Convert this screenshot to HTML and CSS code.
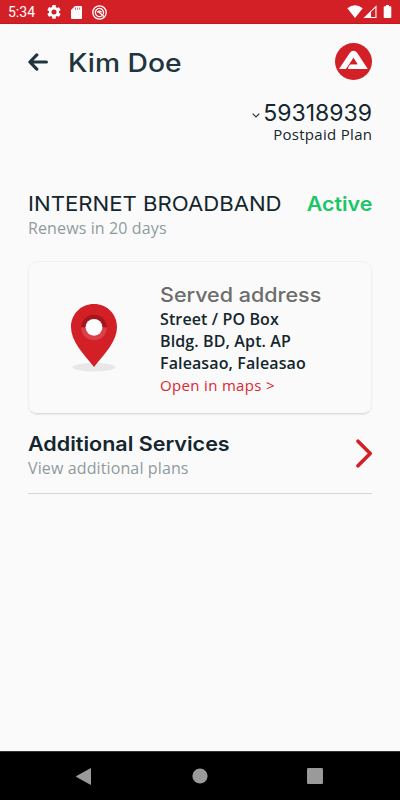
FILE: index.html
```html
<!DOCTYPE html>
<html lang="en">
<head>
<meta charset="utf-8">
<title>Internet Broadband</title>
<link rel="stylesheet" href="styles.css">
</head>
<body>
<div class="status">
  <span class="clock">5:34</span>
  <svg class="gear" width="14" height="14" viewBox="2 2 20 20"><path fill="#fff" d="M19.14 12.94c.04-.3.06-.61.06-.94s-.02-.64-.07-.94l2.03-1.58a.49.49 0 0 0 .12-.61l-1.92-3.32a.49.49 0 0 0-.59-.22l-2.39.96a7 7 0 0 0-1.62-.94l-.36-2.54A.48.48 0 0 0 13.92 2h-3.84a.48.48 0 0 0-.47.41l-.36 2.54c-.59.24-1.13.57-1.62.94l-2.39-.96a.49.49 0 0 0-.59.22L2.74 8.87a.48.48 0 0 0 .12.61l2.03 1.58a7 7 0 0 0 0 1.88l-2.03 1.58a.49.49 0 0 0-.12.61l1.92 3.32c.12.22.37.29.59.22l2.39-.96c.5.38 1.03.7 1.62.94l.36 2.54c.05.24.24.41.48.41h3.84c.24 0 .44-.17.47-.41l.36-2.54a7 7 0 0 0 1.62-.94l2.39.96c.22.08.47 0 .59-.22l1.92-3.32a.48.48 0 0 0-.12-.61zM12 15.6a3.6 3.6 0 1 1 0-7.2 3.6 3.6 0 0 1 0 7.2z"/></svg>
  <svg class="sd" width="11" height="13" viewBox="0 0 11 13"><path fill="#fff" d="M4 0h6a1 1 0 0 1 1 1v11a1 1 0 0 1-1 1H1a1 1 0 0 1-1-1V4z"/><path stroke="#d32027" stroke-width=".7" d="M4.500 1.500v2.300M6.600 1.500v2.300M8.700 1.500v2.300"/></svg>
  <svg class="radar" width="15" height="15" viewBox="0 0 15 15" fill="none" stroke="#fff"><circle cx="7.500" cy="7.500" r="6.700" stroke-width="1.300"/><path stroke-width="1.300" stroke-linecap="round" d="M9.700 11A4.100 4.100 0 1 1 11.300 9M6.800 6.900l4.900 4.300"/><path stroke-width="1.300" d="M5.300 7.300Q7.300 4.900 9.600 7.300"/></svg>
  <svg class="signals" width="46" height="14" viewBox="0 0 46 14"><path fill="#fff" d="M.3 3.200Q8-2.600 15.700 3.200L8 13z"/><path fill="#fff" d="M29.500.3V13H16.500z"/><path fill="#d32027" d="M24 6.900 28.400 2.800V11.900H24z"/><path fill="#fff" d="M39 1.200V0h3v1.200h1.600q.7 0 .7.700v10.400q0 .7-.7.700h-6.200q-.7 0-.7-.7V1.900q0-.7.700-.7z"/></svg>
</div>
<main class="page">
  <header class="top">
    <svg class="back" width="20" height="18" viewBox="0 0 20 18" fill="none" stroke="#20353e" stroke-width="3.200" stroke-linecap="round" stroke-linejoin="round"><path d="M8.800 1.900 1.900 9l6.900 7.100M2.500 9h15.900"/></svg>
    <h1 class="name">Kim Doe</h1>
    <svg class="logo" width="37" height="37" viewBox="0 0 37 37"><circle cx="18.500" cy="18.500" r="18.500" fill="#d32027"/><path fill="#fff" d="M4 26 14.700 10Q16.300 7.800 18.500 7.800T22.300 10L32.800 26H12.800Q13 23.500 15 21.300H22.300L18.500 15.400 12.500 24.400Q11.500 26 10 26z"/><path fill="#d32027" d="M18.500 14.800 11 26h1.900Q13 23 15.500 21.300H22.700z"/></svg>
  </header>
  <section class="account">
    <div class="number"><svg width="8" height="5" viewBox="0 0 8 5" fill="none" stroke="#20353e" stroke-width="1.200"><path d="m.7.7 3.300 3.300L7.300.7"/></svg><span class="digits">59318939</span></div>
    <div class="plan">Postpaid Plan</div>
  </section>
  <section class="service">
    <div class="row"><h2 class="title">INTERNET BROADBAND</h2><span class="active">Active</span></div>
    <p class="note renews">Renews in 20 days</p>
  </section>
  <section class="card">
    <svg class="pin" width="46" height="70" viewBox="0 0 46 70"><ellipse cx="23" cy="63.200" rx="21.500" ry="4.200" fill="#e8e8e8"/><path fill="#d32027" d="M23 0C10 0 0 10 0 23 0 37 11 48 23 63 35 48 46 37 46 23 46 10 36 0 23 0z"/><path fill="#a3161d" d="M10.200 23.500a12.800 12.800 0 0 1 25.600 0z"/><path fill="#dc414a" d="M10.200 23.500a12.800 12.800 0 0 0 25.600 0z"/><circle cx="23" cy="23.300" r="8.400" fill="#fff"/></svg>
    <div class="address">
      <h3 class="served">Served address</h3>
      <p class="line">Street / PO Box</p>
      <p class="line">Bldg. BD, Apt. AP</p>
      <p class="line">Faleasao, Faleasao</p>
      <p class="maps">Open in maps &gt;</p>
    </div>
  </section>
  <section class="extra">
    <div><h2 class="services">Additional Services</h2><p class="note view">View additional plans</p></div>
    <svg width="16" height="29" viewBox="0 0 16 29" fill="none" stroke="#d32027" stroke-width="3.600" stroke-linecap="round" stroke-linejoin="round"><path d="M2 2.200 14.200 14.500 2 26.800"/></svg>
  </section>
</main>
<nav class="nav">
  <svg width="15" height="17" viewBox="0 0 15 17"><path fill="#9a9a9a" d="M15 .6v15.800q0 .6-.6.300L.4 9Q-.2 8.500.4 8L14.400.3Q15 0 15 .6z"/></svg>
  <svg class="home" width="16" height="16"><circle cx="8" cy="8" r="7.600" fill="#9a9a9a"/></svg>
  <svg width="16" height="16"><rect width="16" height="16" rx="1.200" fill="#9a9a9a"/></svg>
</nav>
</body>
</html>
```
FILE: styles.css
```css
* { box-sizing: border-box; margin: 0; padding: 0; }
body { width: 400px; height: 800px; display: flex; flex-direction: column; background: #fafafa; font-family: "Open Sans", sans-serif; color: #14262e; overflow: hidden; white-space: nowrap; }
svg { display: block; flex: none; }
h1, h2, h3, .digits, .active { font-family: Inter, sans-serif; font-weight: 500; }
h1, h2, h3 { transform-origin: left center; }
.status { height: 24px; background: #d32027; border-bottom: 1px solid #c41820; display: flex; align-items: center; padding: 1px 8px 0; color: #fff; }
.clock { font: 14px Roboto, sans-serif; width: 39px; }
.sd { margin-left: 10px; }
.radar { margin-left: 10px; }
.signals { margin-left: auto; margin-right: -1px; }
.page { flex: 1; padding: 0 28px; }
.top { height: 75px; display: flex; align-items: center; }
.name { margin-left: 20px; font-size: 25px; line-height: 30px; padding-top: 3px; transform: scaleX(1.13); color: #20353e; }
.logo { margin-left: auto; }
.account { display: flex; flex-direction: column; align-items: flex-end; }
.number { height: 27px; display: flex; align-items: center; gap: 3px; }
.digits { font-size: 23px; line-height: 24px; font-weight: 400; }
.number svg { margin-top: 5px; }
.plan { font-size: 15px; line-height: 17px; letter-spacing: .3px; margin-right: -.3px; }
.service { margin-top: 49px; }
.row { height: 24px; display: flex; justify-content: space-between; align-items: center; }
.title { font-size: 20px; font-weight: 400; transform: scaleX(1.107); }
.active { font-size: 20px; font-weight: 600; color: #1bc666; transform: scaleX(1.07); transform-origin: right center; }
.note { font-size: 16px; line-height: 24px; color: #909a9e; letter-spacing: .12px; }
.card { height: 153px; margin-top: 21px; border-radius: 9px; border: 1px solid #f1f1f1; border-bottom-color: #dedede; box-shadow: 0 1px 1px #e8e8e8; display: flex; padding: 21px 0 0 42px; }
.pin { margin-top: 21px; }
.address { margin-left: 43px; }
.served { font-size: 20px; line-height: 25px; color: #6c6c6c; font-weight: 500; transform: scaleX(1.075); }
.line { font-size: 16px; line-height: 22px; font-weight: 600; letter-spacing: .12px; }
.maps { font-size: 15px; line-height: 22px; color: #dc2830; letter-spacing: .33px; }
.extra { height: 80px; padding-top: 18px; border-bottom: 1px solid #d6d6d6; display: flex; justify-content: space-between; }
.services { font-size: 20px; line-height: 24px; font-weight: 600; transform: scaleX(1.076); }
.extra > svg { margin-top: 7px; }
.nav { height: 49px; background: #000; border-top: 1px solid #333; display: flex; justify-content: space-between; align-items: center; padding: 0 77px 0 76px; }
.home { margin-left: 1px; }
```
